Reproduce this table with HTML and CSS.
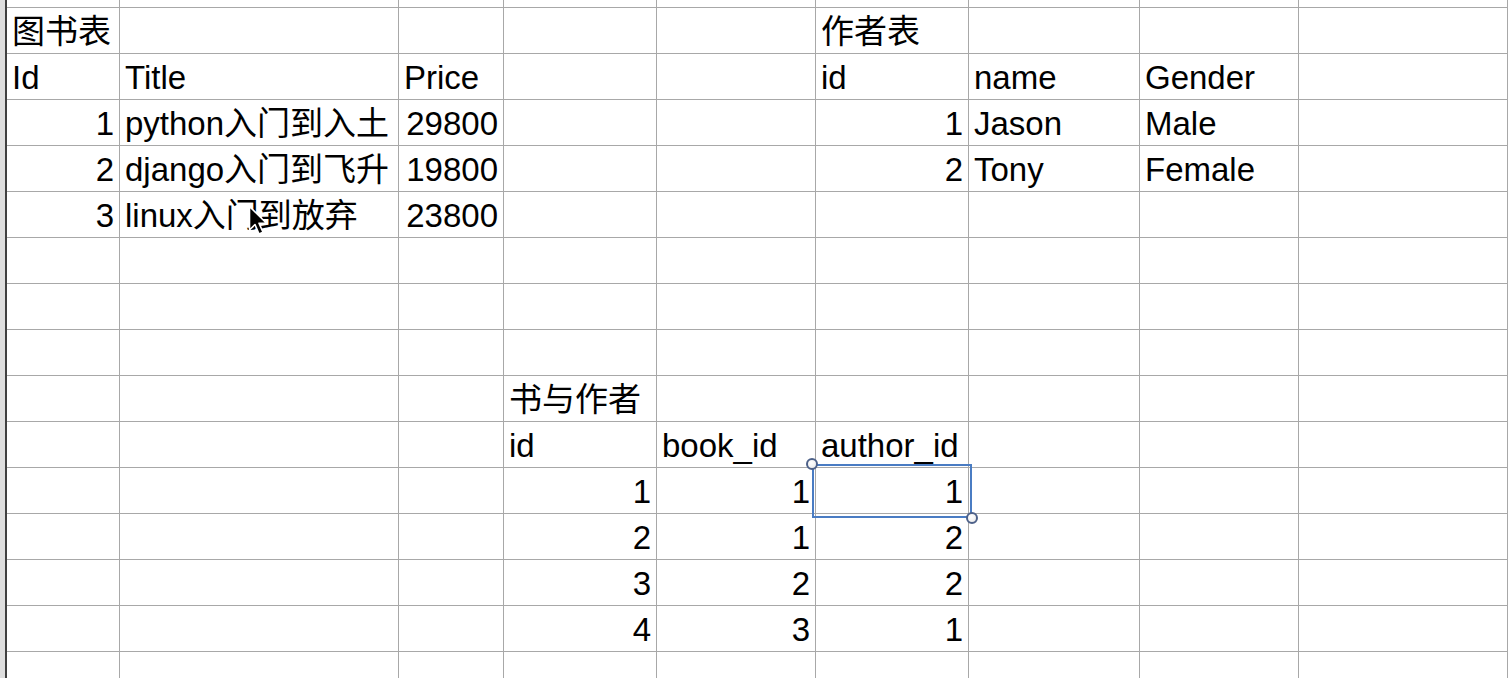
FILE: index.html
```html
<!DOCTYPE html>
<html>
<head>
<meta charset="utf-8">
<link rel="stylesheet" href="styles.css">
</head>
<body>
<div class="sheet">
  <div class="gutter"></div>
  <div class="grid">
    <!-- row 0 (partial) -->
    <div class="c top"></div><div class="c top"></div><div class="c top"></div><div class="c top"></div><div class="c top"></div><div class="c top"></div><div class="c top"></div><div class="c top"></div><div class="c top"></div>
    <!-- row 1 -->
    <div class="c">图书表</div><div class="c"></div><div class="c"></div><div class="c"></div><div class="c"></div><div class="c">作者表</div><div class="c"></div><div class="c"></div><div class="c"></div>
    <!-- row 2 -->
    <div class="c">Id</div><div class="c">Title</div><div class="c">Price</div><div class="c"></div><div class="c"></div><div class="c">id</div><div class="c">name</div><div class="c">Gender</div><div class="c"></div>
    <!-- row 3 -->
    <div class="c n">1</div><div class="c">python入门到入土</div><div class="c n">29800</div><div class="c"></div><div class="c"></div><div class="c n">1</div><div class="c">Jason</div><div class="c">Male</div><div class="c"></div>
    <!-- row 4 -->
    <div class="c n">2</div><div class="c">django入门到飞升</div><div class="c n">19800</div><div class="c"></div><div class="c"></div><div class="c n">2</div><div class="c">Tony</div><div class="c">Female</div><div class="c"></div>
    <!-- row 5 -->
    <div class="c n">3</div><div class="c">linux入门到放弃</div><div class="c n">23800</div><div class="c"></div><div class="c"></div><div class="c"></div><div class="c"></div><div class="c"></div><div class="c"></div>
    <!-- row 6 -->
    <div class="c"></div><div class="c"></div><div class="c"></div><div class="c"></div><div class="c"></div><div class="c"></div><div class="c"></div><div class="c"></div><div class="c"></div>
    <!-- row 7 -->
    <div class="c"></div><div class="c"></div><div class="c"></div><div class="c"></div><div class="c"></div><div class="c"></div><div class="c"></div><div class="c"></div><div class="c"></div>
    <!-- row 8 -->
    <div class="c"></div><div class="c"></div><div class="c"></div><div class="c"></div><div class="c"></div><div class="c"></div><div class="c"></div><div class="c"></div><div class="c"></div>
    <!-- row 9 -->
    <div class="c"></div><div class="c"></div><div class="c"></div><div class="c">书与作者</div><div class="c"></div><div class="c"></div><div class="c"></div><div class="c"></div><div class="c"></div>
    <!-- row 10 -->
    <div class="c"></div><div class="c"></div><div class="c"></div><div class="c">id</div><div class="c">book_id</div><div class="c">author_id</div><div class="c"></div><div class="c"></div><div class="c"></div>
    <!-- row 11 -->
    <div class="c"></div><div class="c"></div><div class="c"></div><div class="c n">1</div><div class="c n">1</div><div class="c n sel">1<span class="selbox"><span class="handle h-tl"></span><span class="handle h-br"></span></span></div><div class="c"></div><div class="c"></div><div class="c"></div>
    <!-- row 12 -->
    <div class="c"></div><div class="c"></div><div class="c"></div><div class="c n">2</div><div class="c n">1</div><div class="c n">2</div><div class="c"></div><div class="c"></div><div class="c"></div>
    <!-- row 13 -->
    <div class="c"></div><div class="c"></div><div class="c"></div><div class="c n">3</div><div class="c n">2</div><div class="c n">2</div><div class="c"></div><div class="c"></div><div class="c"></div>
    <!-- row 14 -->
    <div class="c"></div><div class="c"></div><div class="c"></div><div class="c n">4</div><div class="c n">3</div><div class="c n">1</div><div class="c"></div><div class="c"></div><div class="c"></div>
    <!-- row 15 -->
    <div class="c"></div><div class="c"></div><div class="c"></div><div class="c"></div><div class="c"></div><div class="c"></div><div class="c"></div><div class="c"></div><div class="c"></div>
  </div>
</div>
<svg class="cursor" width="22" height="34" viewBox="0 0 22 34">
  <path d="M1.5 1.5 L1.5 25 L7 19.5 L11 29 L15 27.3 L11 18.2 L18.5 18.2 Z" fill="#000" stroke="#fff" stroke-width="1.6" stroke-linejoin="round"/>
</svg>
</body>
</html>
```
FILE: styles.css
```css
html, body {
  margin: 0;
  padding: 0;
  background: #fff;
  overflow: hidden;
}
body {
  width: 1508px;
  height: 678px;
  position: relative;
}
.sheet {
  display: flex;
  height: 678px;
}
.gutter {
  width: 5px;
  background: #dedede;
  border-right: 2px solid #404040;
  flex: none;
}
.grid {
  flex: 1;
  display: grid;
  grid-template-columns: 113px 279px 105px 153px 159px 153px 171px 159px 1fr;
  grid-auto-rows: 46px;
  grid-template-rows: 8px;
  font-family: "Liberation Sans", "Noto Sans CJK SC", sans-serif;
  font-size: 33px;
  color: #000;
  align-content: start;
}
.c {
  box-sizing: border-box;
  border-right: 1px solid #a8a8a8;
  border-bottom: 1px solid #a8a8a8;
  padding: 2px 5px 0;
  line-height: 43px;
  white-space: nowrap;
  overflow: visible;
}
.c.n {
  text-align: right;
}
.sel {
  position: relative;
}
.selbox {
  position: absolute;
  left: -4px;
  top: -4px;
  width: 160px;
  height: 54px;
  box-sizing: border-box;
  border: 2px solid #4a7cc3;
}
.handle {
  position: absolute;
  width: 12px;
  height: 12px;
  border-radius: 50%;
  box-sizing: border-box;
  border: 2px solid #4d6189;
  background: radial-gradient(circle at 40% 35%, #ffffff 0%, #f2f2f2 60%, #d8d8d8 100%);
}
.h-tl {
  left: -8px;
  top: -8px;
}
.h-br {
  right: -8px;
  bottom: -8px;
}
.cursor {
  position: absolute;
  left: 248px;
  top: 205px;
}
```
